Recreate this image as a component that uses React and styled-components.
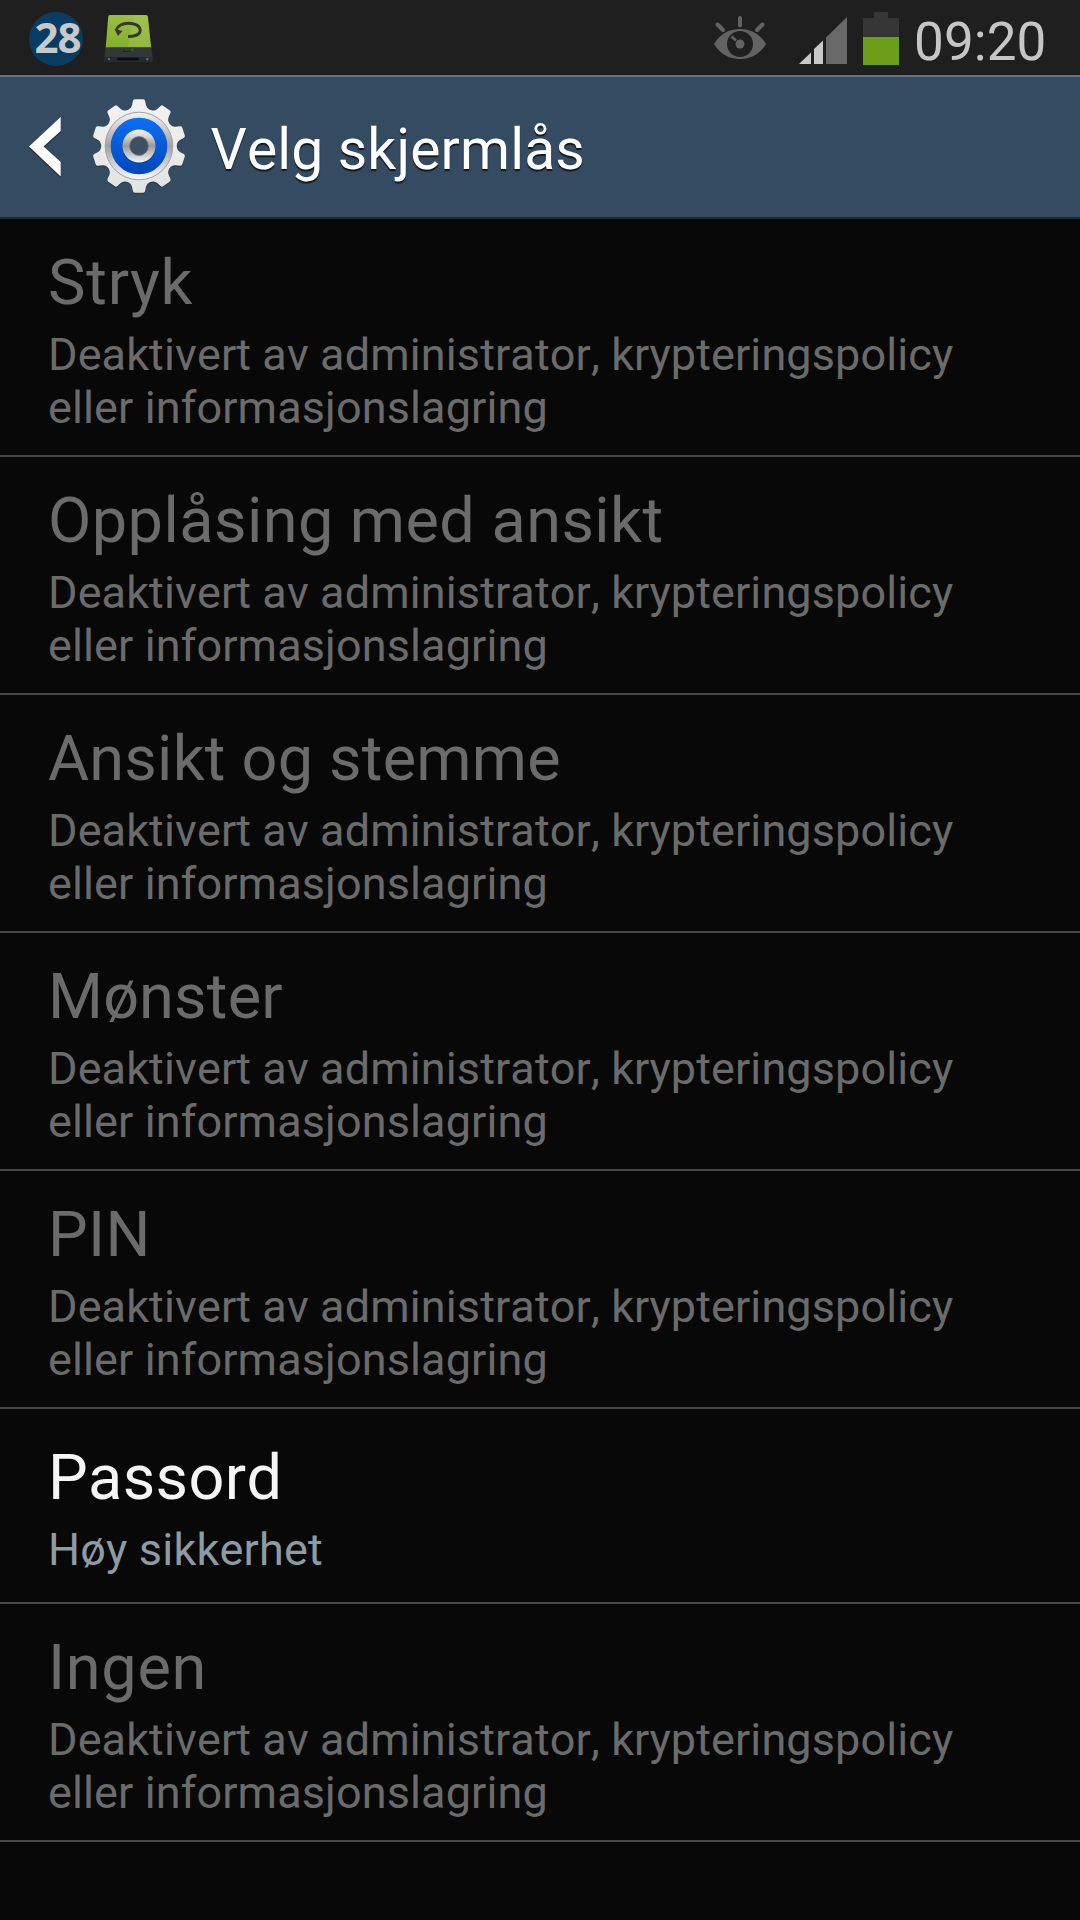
import React from "react";
import styled, { createGlobalStyle } from "styled-components";

const GlobalStyle = createGlobalStyle`
  html, body { margin: 0; padding: 0; background: #080808; }
  * { box-sizing: border-box; }
`;

const Screen = styled.div`
  width: 1080px;
  height: 1920px;
  display: flex;
  flex-direction: column;
  background: #080808;
  overflow: hidden;
  font-family: Roboto, "Noto Sans", sans-serif;
  font-kerning: none;
`;

const StatusBar = styled.div`
  flex: none;
  height: 75px;
  display: flex;
  align-items: flex-start;
  justify-content: space-between;
  background: #1f1f1f;
`;

const Notifications = styled.div`
  display: flex;
  gap: 19px;
  padding: 12px 0 0 29px;
`;

const Indicators = styled.div`
  display: flex;
  align-items: flex-start;
`;

const Badge = styled.div`
  width: 54px;
  height: 54px;
  padding-left: 3px;
  border-radius: 50%;
  background: #083c62;
  color: #c9c9c9;
  font: bold 42px/49px "Noto Sans", sans-serif;
  letter-spacing: -1px;
  text-align: center;
`;

const Icon = styled.svg`
  display: block;
  flex: none;
  overflow: visible;
  margin-left: ${(p) => p.$left || 0}px;
  margin-bottom: ${(p) => p.$bottom || 0}px;
`;

const Clock = styled.div`
  width: 166px;
  margin-left: 15px;
  font-size: 53px;
  line-height: 64px;
  letter-spacing: 0.1px;
  padding-top: 10px;
  color: #c6c6c6;
`;

const Header = styled.header`
  flex: none;
  height: 144px;
  display: flex;
  align-items: center;
  padding-left: 28.5px;
  background: #354b61;
  border-top: 2px solid #5d768c;
  border-bottom: 2px solid #1b2b3b;
`;

const HeaderTitle = styled.h1`
  margin: 0 0 0 24px;
  padding-top: 5px;
  font-size: 57px;
  line-height: 68px;
  font-weight: 400;
  letter-spacing: 0.15px;
  color: #fff;
  text-shadow: 0 2px 1px #101820;
`;

const List = styled.ul`
  list-style: none;
  margin: 0;
  padding: 0;
`;

const Row = styled.li`
  height: ${(p) => (p.$enabled ? 195 : 238)}px;
  padding: ${(p) => (p.$enabled ? 32 : 27)}px 48px 0;
  border-bottom: 2px solid #484848;
`;

const Title = styled.div`
  font-size: 63px;
  line-height: 74px;
  letter-spacing: ${(p) => p.$tracking}px;
  color: ${(p) => (p.$enabled ? "#f5f5f5" : "#6b6b6b")};
`;

const Summary = styled.div`
  margin-top: 8px;
  font-size: 45px;
  line-height: 53px;
  letter-spacing: ${(p) => (p.$enabled ? 0.2 : 0.11)}px;
  color: ${(p) => (p.$enabled ? "#8d9ba3" : "#6b6b6b")};
`;

const DISABLED = "Deaktivert av administrator, krypteringspolicy eller informasjonslagring";

const OPTIONS = [
  { title: "Stryk", summary: DISABLED, tracking: 0.85 },
  { title: "Opplåsing med ansikt", summary: DISABLED, tracking: 0.45 },
  { title: "Ansikt og stemme", summary: DISABLED, tracking: 0.23 },
  { title: "Mønster", summary: DISABLED, tracking: 0.2 },
  { title: "PIN", summary: DISABLED, tracking: 0.3 },
  { title: "Passord", summary: "Høy sikkerhet", enabled: true, tracking: 0.35 },
  { title: "Ingen", summary: DISABLED, tracking: 0.7 },
];

function gearPath(teeth, outer, root) {
  const step = (Math.PI * 2) / teeth;
  const at = (r, a) => `${(r * Math.sin(a)).toFixed(2)} ${(-r * Math.cos(a)).toFixed(2)}`;
  let d = "";
  for (let i = 0; i < teeth; i++) {
    const a = i * step;
    d += `${i ? "L" : "M"}${at(root + 3.5, a - 0.17)}L${at(outer - 1.5, a - 0.135)}Q${at(outer, a - 0.125)} ${at(outer, a - 0.09)}`;
    d += `L${at(outer, a + 0.09)}Q${at(outer, a + 0.125)} ${at(outer - 1.5, a + 0.135)}L${at(root + 3.5, a + 0.17)}`;
    d += `Q${at(root + 0.6, a + 0.2)} ${at(root, a + 0.29)}L${at(root, a + step - 0.29)}Q${at(root + 0.6, a + step - 0.2)} ${at(root + 3.5, a + step - 0.17)}`;
  }
  return d + "Z";
}

const BackupIcon = () => (
  <Icon width="52" height="54" viewBox="102 12 52 54">
    <defs>
      <linearGradient id="lid" x1="0" y1="0" x2="0" y2="1">
        <stop offset="0" stopColor="#9abf45" />
        <stop offset="1" stopColor="#85ad2a" />
      </linearGradient>
    </defs>
    <path d="M110 15H146q1.700 0 1.900 1.700L151.300 48H105.700L108.200 16.700Q108.400 15 110 15Z" fill="url(#lid)" />
    <path d="M134.500 15.500H146q1.400 0 1.500 1.500L150.500 47H127.500Z" fill="#a9c95c" opacity=".4" />
    <path d="M105.700 47.200H151.300L152.900 59.500Q153 62 151 62H106Q104 62 104.100 59.500Z" fill="#33363b" />
    <path d="M104.300 57H152.700L152.800 60q-.3 2-2 2H106.200q-1.700 0-2-2Z" fill="#27292e" />
    <path d="M117.500 57.700H138.500V60.300H117.500Z" fill="#0b0b0c" />
    <circle cx="109" cy="59" r="1.200" fill="#66686c" />
    <circle cx="147.300" cy="59" r="1.200" fill="#66686c" />
    <path d="M123.500 49v2.500h7" fill="none" stroke="#202225" strokeWidth="1" />
    <path d="M131.500 48.500h1.500v2.500h-1.500z" fill="#2a7a26" />
    <path d="M128 36.500C136 36.800 140.200 34 140.200 30.200C140.200 26 135 23.200 128.500 23.200C122.500 23.200 117.500 26 116.300 30" fill="none" stroke="#35392f" strokeWidth="2.900" />
    <path d="M114.500 29L122.500 31L118 36Z" fill="#35392f" />
  </Icon>
);

const SmartStayIcon = () => (
  <Icon width="52" height="75" viewBox="714 0 52 75">
    <path d="M714 44C720 34 729 29 740 29S760 34 766 44C760 54 751 59 740 59S720 54 714 44Z" fill="#636363" />
    <circle cx="740" cy="44" r="13" fill="#1f1f1f" />
    <circle cx="740" cy="44" r="4.500" fill="#636363" />
    <path d="M731.500 36.500L736 40.500" stroke="#636363" strokeWidth="2.700" />
    <path d="M740 18V25.500M717.500 24.500L723 30M762.500 24.500L757 30" stroke="#636363" strokeWidth="4" strokeLinecap="round" />
  </Icon>
);

const SignalIcon = () => (
  <Icon width="48" height="75" viewBox="799 0 48 75" $left={33}>
    <path d="M799 64L811 52.500V64Z" fill="#c9c9c9" />
    <path d="M814 49L823 40.500V64H814Z" fill="#c9c9c9" />
    <path d="M826 37.500L847 17V64H826Z" fill="#686868" />
  </Icon>
);

const BatteryIcon = () => (
  <Icon width="36" height="75" viewBox="863 0 36 75" $left={16}>
    <path d="M874 12H888V18H899V37H863V18H874Z" fill="#363636" />
    <path d="M863 37H899V65H863Z" fill="#6d9e1a" />
  </Icon>
);

const BackIcon = () => (
  <Icon width="32" height="60" viewBox="28.500 117 32 60">
    <path d="M60.200 118.500V132.500L43 148L60.200 163.500V178L28.500 148Z" fill="#101820" opacity=".6" />
    <path d="M60.200 117V131L43 146.500L60.200 162V176.500L28.500 146.500Z" fill="#fff" />
  </Icon>
);

const SettingsIcon = () => (
  <Icon width="96" height="96" viewBox="-48 -48 96 96" $left={30} $bottom={2}>
    <defs>
      <linearGradient id="metal" x1="0" y1="0" x2="0" y2="1">
        <stop offset="0" stopColor="#f2f2f2" />
        <stop offset=".5" stopColor="#ececec" />
        <stop offset="1" stopColor="#e2e2e2" />
      </linearGradient>
      <linearGradient id="rim" x1="0" y1="0" x2="0" y2="1">
        <stop offset="0" stopColor="#f4f4f4" />
        <stop offset=".5" stopColor="#a2a2a2" />
        <stop offset="1" stopColor="#fafafa" />
      </linearGradient>
      <linearGradient id="blue" x1="0" y1="0" x2="0" y2="1">
        <stop offset="0" stopColor="#0a70f5" />
        <stop offset="1" stopColor="#0046b8" />
      </linearGradient>
      <linearGradient id="hub" x1="0" y1="0" x2="0" y2="1">
        <stop offset="0" stopColor="#f2f2f2" />
        <stop offset=".2" stopColor="#d8d8d8" />
        <stop offset=".5" stopColor="#9a9a9a" />
        <stop offset="1" stopColor="#f6f6f6" />
      </linearGradient>
    </defs>
    <path d={gearPath(10, 47, 37.8)} fill="#1c2a38" opacity=".5" transform="translate(0 1.200)" />
    <path d={gearPath(10, 47, 37.8)} fill="url(#metal)" />
    <circle r="33.800" fill="url(#rim)" stroke="#a2a2a2" strokeWidth="1" />
    <circle r="28.300" fill="url(#blue)" />
    <circle r="17" cy="1" fill="#003a9c" opacity=".6" />
    <circle r="16.600" fill="url(#hub)" />
    <circle r="9.400" fill="#3b5063" stroke="#777" strokeWidth=".8" />
  </Icon>
);

export default function App() {
  return (
    <Screen>
      <GlobalStyle />
      <StatusBar>
        <Notifications>
          <Badge>28</Badge>
          <BackupIcon />
        </Notifications>
        <Indicators>
          <SmartStayIcon />
          <SignalIcon />
          <BatteryIcon />
          <Clock>09:20</Clock>
        </Indicators>
      </StatusBar>
      <Header>
        <BackIcon />
        <SettingsIcon />
        <HeaderTitle>Velg skjermlås</HeaderTitle>
      </Header>
      <List>
        {OPTIONS.map((o) => (
          <Row key={o.title} $enabled={o.enabled}>
            <Title $enabled={o.enabled} $tracking={o.tracking}>{o.title}</Title>
            <Summary $enabled={o.enabled}>{o.summary}</Summary>
          </Row>
        ))}
      </List>
    </Screen>
  );
}
